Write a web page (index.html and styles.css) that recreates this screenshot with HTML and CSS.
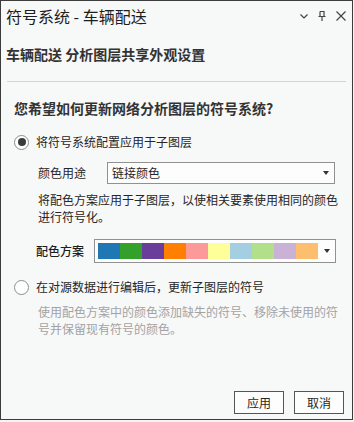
FILE: index.html
```html
<!DOCTYPE html>
<html lang="zh-CN">
<head>
<meta charset="utf-8">
<link rel="stylesheet" href="styles.css">
</head>
<body>
<div class="frame">
  <div class="titlebar">
    <div class="title">符号系统 - 车辆配送</div>
    <div class="tb-icons">
      <svg class="ic" width="10" height="10" viewBox="0 0 10 10"><path d="M1.5 3.5 L5 7 L8.5 3.5" fill="none" stroke="#444" stroke-width="1.2"/></svg>
      <svg class="ic" width="10" height="12" viewBox="0 0 10 12"><path d="M3 1.5 H7 V6.5 M3 1.5 V6.5 M1.5 6.5 H8.5 M5 6.5 V11" fill="none" stroke="#444" stroke-width="1.2"/></svg>
      <svg class="ic" width="12" height="12" viewBox="0 0 12 12"><path d="M1.5 1.5 L10.5 10.5 M10.5 1.5 L1.5 10.5" fill="none" stroke="#444" stroke-width="1.2"/></svg>
    </div>
  </div>
  <div class="subhead">车辆配送 分析图层共享外观设置</div>
  <div class="rule"></div>
  <div class="content">
    <div class="question">您希望如何更新网络分析图层的符号系统?</div>
    <div class="radio-row">
      <span class="radio checked"></span>
      <span class="radio-label">将符号系统配置应用于子图层</span>
    </div>
    <div class="field-row">
      <span class="field-label">颜色用途</span>
      <div class="select">
        <span class="select-text">链接颜色</span>
        <span class="arrow"></span>
      </div>
    </div>
    <p class="desc"><span class="ln">将配色方案应用于子图层，以使相关要素使用相同的颜色</span><span class="ln">进行符号化。</span></p>
    <div class="field-row scheme-row">
      <span class="field-label scheme-label">配色方案</span>
      <div class="select scheme-select">
        <div class="ramp">
          <span class="sw" style="background:#1f78b4"></span>
          <span class="sw" style="background:#33a02c"></span>
          <span class="sw" style="background:#6a3d9a"></span>
          <span class="sw" style="background:#ff7f00"></span>
          <span class="sw" style="background:#fb9a99"></span>
          <span class="sw" style="background:#ffff99"></span>
          <span class="sw" style="background:#a6cee3"></span>
          <span class="sw" style="background:#b2df8a"></span>
          <span class="sw" style="background:#cab2d6"></span>
          <span class="sw" style="background:#fdbf6f"></span>
        </div>
        <span class="arrow"></span>
      </div>
    </div>
    <div class="radio-row second">
      <span class="radio"></span>
      <span class="radio-label">在对源数据进行编辑后，更新子图层的符号</span>
    </div>
    <p class="desc gray"><span class="ln">使用配色方案中的颜色添加缺失的符号、移除未使用的符</span><span class="ln">号并保留现有符号的颜色。</span></p>
  </div>
  <div class="footer">
    <button class="btn">应用</button>
    <button class="btn">取消</button>
  </div>
</div>
</body>
</html>
```
FILE: styles.css
```css
html, body {
  margin: 0;
  padding: 0;
  background: #f4f4f4;
}
body {
  font-family: "Noto Sans CJK SC", "Noto Sans", sans-serif;
  color: #262626;
}
.frame {
  width: 353px;
  height: 420px;
  box-sizing: border-box;
  border: 1px solid #3c3c3c;
  background: #f7f8f8;
  display: flex;
  flex-direction: column;
}
.titlebar {
  height: 30px;
  display: flex;
  align-items: center;
  padding-left: 5px;
  padding-right: 5px;
}
.title {
  font-size: 16px;
  line-height: 20px;
  color: #1e1e1e;
  flex: 1;
}
.tb-icons {
  display: flex;
  align-items: center;
  gap: 8px;
}
.ic { display: block; }
.subhead {
  margin-top: 13px;
  padding-left: 5px;
  font-size: 14px;
  line-height: 20px;
  font-weight: 700;
  color: #333;
}
.rule {
  margin: 17px 6px 0 6px;
  height: 1px;
  background: #d4d4d4;
}
.content {
  padding-left: 13px;
  padding-right: 8px;
}
.question {
  margin-top: 16px;
  font-size: 14px;
  line-height: 20px;
  font-weight: 700;
  color: #333;
}
.radio-row {
  margin-top: 14px;
  height: 20px;
  display: flex;
  align-items: center;
}
.radio-row.second { margin-top: 14px; }
.radio {
  width: 15px;
  height: 15px;
  box-sizing: border-box;
  border: 1px solid #8c8c8c;
  border-radius: 50%;
  background: #fff;
  display: flex;
  align-items: center;
  justify-content: center;
  flex: none;
}
.radio.checked::after {
  content: "";
  width: 8px;
  height: 8px;
  border-radius: 50%;
  background: #3a3a3a;
}
.radio-label {
  margin-left: 7px;
  font-size: 12px;
  line-height: 20px;
}
.field-row {
  margin-top: 10px;
  padding-left: 24px;
  display: flex;
  align-items: center;
}
.field-label {
  width: 69px;
  font-size: 12px;
  line-height: 20px;
  flex: none;
}
.select {
  width: 228px;
  height: 22px;
  box-sizing: border-box;
  border: 1px solid #919191;
  background: #fdfdfd;
  display: flex;
  align-items: center;
  padding-left: 4px;
  padding-right: 5px;
}
.select-text {
  flex: 1;
  font-size: 12px;
  line-height: 18px;
}
.arrow {
  width: 0;
  height: 0;
  border-left: 3px solid transparent;
  border-right: 3px solid transparent;
  border-top: 4px solid #333;
  margin-left: auto;
}
.desc {
  margin: 7px 0 0 24px;
  font-size: 12px;
  line-height: 17px;
}
.ln {
  display: block;
  white-space: nowrap;
}
.scheme-row {
  margin-top: 14px;
  padding-left: 22px;
}
.scheme-label {
  width: 58px;
  font-weight: 500;
  color: #1e1e1e;
}
.scheme-select {
  width: 242px;
  height: 24px;
  padding-left: 3px;
}
.ramp {
  display: flex;
  height: 16px;
}
.sw {
  width: 22px;
  height: 16px;
}
.desc.gray {
  margin-top: 6px;
  color: #a3a3a3;
}
.footer {
  margin-top: auto;
  display: flex;
  justify-content: flex-end;
  gap: 10px;
  padding: 0 8px 5px 0;
}
.btn {
  width: 50px;
  height: 23px;
  box-sizing: border-box;
  border: 1px solid #555;
  background: #fdfdfd;
  font-family: "Noto Sans CJK SC", "Noto Sans", sans-serif;
  font-size: 12px;
  color: #262626;
  padding: 0;
}
```
